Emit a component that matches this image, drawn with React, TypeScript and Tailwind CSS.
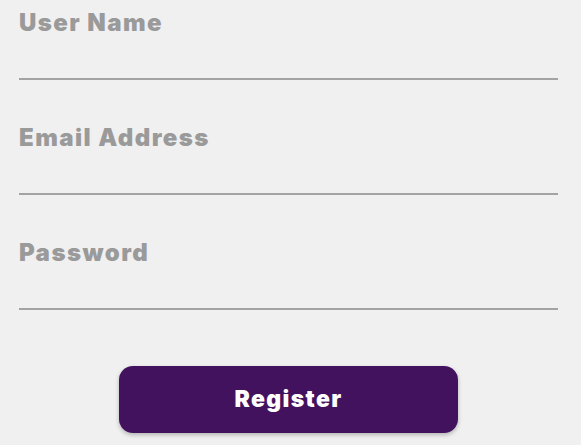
export default function App() {
  const fields = ["User Name", "Email Address", "Password"];
  return (
    <div className="w-[581px] h-[445px] bg-[#f0f0f0] overflow-hidden" style={{ fontFamily: "Inter, 'Noto Sans', sans-serif" }}>
      <div className="pl-[19px] pr-[23px] pt-[9px]">
        {fields.map((f) => (
          <div key={f} className="h-[115px]">
            <div className="text-[24px] leading-[28px] font-black tracking-[0.06em] text-[#9a9a9a]">{f}</div>
            <div className="mt-[41px] h-[2px] bg-[#a3a3a3]" />
          </div>
        ))}
      </div>
      <div className="flex justify-center pt-[12px]">
        <button className="ml-[-4px] w-[339px] h-[67px] rounded-[14px] bg-[#43125f] text-white text-[23px] font-black tracking-[0.06em] shadow-[0_2px_4px_rgba(0,0,0,0.25)]">
          Register
        </button>
      </div>
    </div>
  );
}
